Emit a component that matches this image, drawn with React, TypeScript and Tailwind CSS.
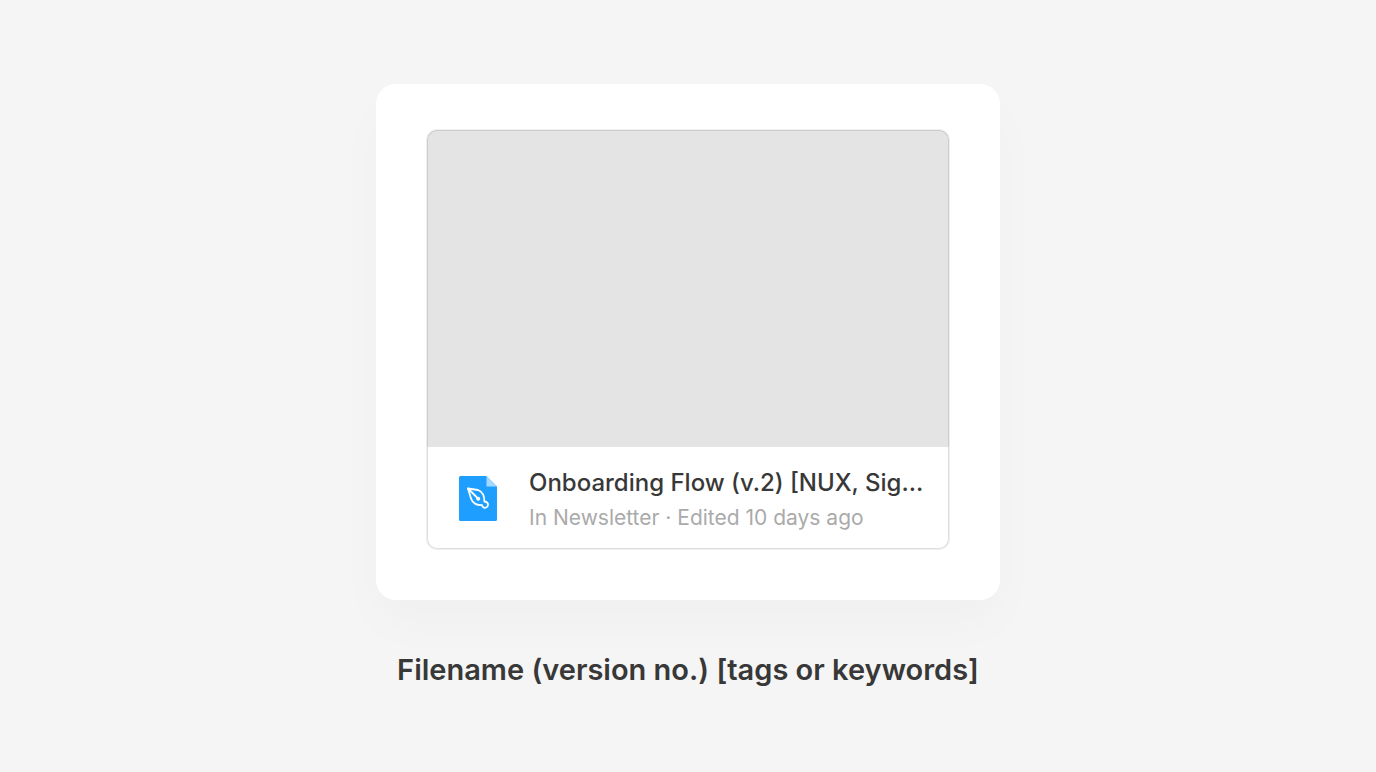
type DesignFile = {
  name: string;
  project: string;
  edited: string;
};

const file: DesignFile = {
  name: "Onboarding Flow (v.2) [NUX, Sig...",
  project: "Newsletter",
  edited: "10 days ago",
};

function FileIcon() {
  return (
    <svg
      className="h-[45px] w-[38px] shrink-0"
      viewBox="0 0 38 45"
      fill="none"
      aria-hidden="true"
    >
      <path
        d="M1.5 0H27.5L38 10.5V43.5a1.5 1.5 0 0 1-1.5 1.5H1.5a1.5 1.5 0 0 1-1.5-1.5V1.5a1.5 1.5 0 0 1 1.5-1.5Z"
        fill="#1E9FFF"
      />
      <path d="M27.5 0L38 10.5H27.5Z" fill="#A5D8FF" />
      <g
        stroke="#fff"
        strokeWidth="1.8"
        strokeLinecap="round"
        strokeLinejoin="round"
      >
        <path d="M9 12.5L19 14C23 15.5 25.4 19.5 25.4 25.5C27.2 25.4 29.4 27 29 29C28.7 31.3 26 32.8 24.2 31.2C23.4 30.5 23 29.8 22.9 29C18.4 29.6 13.6 27.5 12 22.5Z" />
        <path d="M9 12.5L18.5 22" />
      </g>
      <circle cx="19.2" cy="22.8" r="2" fill="#fff" />
    </svg>
  );
}

function FileCard({ name, project, edited }: DesignFile) {
  return (
    <article className="rounded-[10px] bg-white ring-1 ring-[#f0f0f0]">
      <div className="h-[317px] rounded-t-[10px] border border-b-0 border-[#cccccc] bg-[#e4e4e4]" />

      <div className="flex items-center gap-8 rounded-b-[10px] border border-t-0 border-[#dedede] px-[31px] pt-[18px] pb-4">
        <FileIcon />

        <div className="whitespace-nowrap">
          <h2 className="text-[24px] leading-9 font-medium text-[#383838]">
            {name}
          </h2>
          <p className="mt-[3px] text-[21px] leading-7 text-[#aaaaaa]">
            In {project} · Edited {edited}
          </p>
        </div>
      </div>
    </article>
  );
}

export default function App() {
  return (
    <main className="flex min-h-screen flex-col items-center bg-[#f5f5f5] pt-21 font-['Inter',sans-serif]">
      <figure className="flex w-full flex-col items-center">
        <div className="w-full max-w-[624px] rounded-[20px] bg-white px-[51px] pt-[46px] pb-[51px] shadow-[0_24px_50px_rgba(0,0,0,0.025)]">
          <FileCard {...file} />
        </div>

        <figcaption className="mt-[50px] text-[29px] leading-10 font-semibold text-[#383838]">
          Filename (version no.) [tags or keywords]
        </figcaption>
      </figure>
    </main>
  );
}
